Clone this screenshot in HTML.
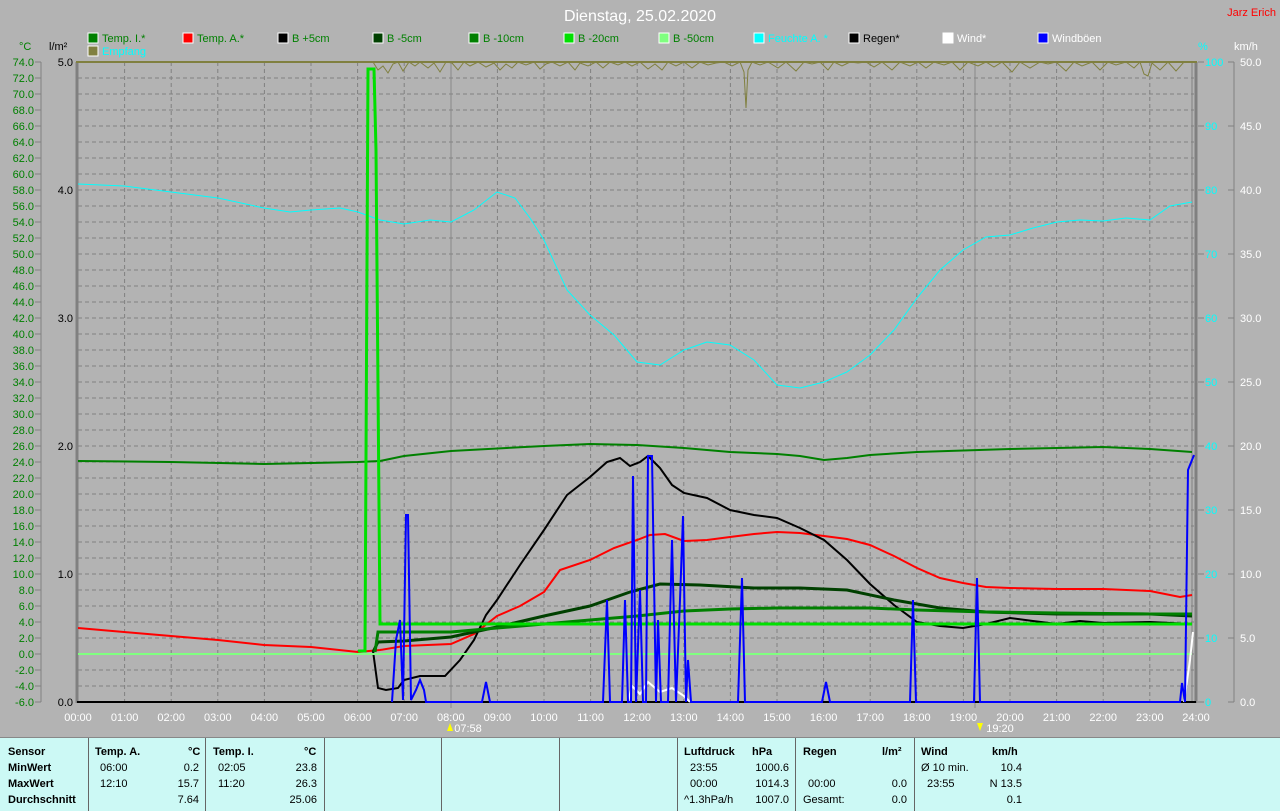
<!DOCTYPE html>
<html><head><meta charset="utf-8"><style>
html,body{margin:0;padding:0;background:#b3b3b3;width:1280px;height:810px;overflow:hidden;font-family:"Liberation Sans",sans-serif}
svg{position:absolute;left:0;top:0}
.tbl{position:absolute;left:0;top:737px;width:1280px;height:73px;background:#ccf9f5;border-top:1px solid #888}
.c{position:absolute;top:0;height:73px;border-left:1px solid #666}
.t{position:absolute;font-size:11px;font-weight:bold;color:#000;white-space:pre}
.n{position:absolute;font-size:11px;color:#000;white-space:pre}
</style></head><body>
<svg width="1280" height="737" font-family="Liberation Sans, sans-serif">
<text x="640" y="21" fill="#fff" font-size="16" text-anchor="middle">Dienstag, 25.02.2020</text>
<text x="1276" y="16" fill="#f00" font-size="11" text-anchor="end">Jarz Erich</text>
<g font-size="11">
<rect x="88" y="33" width="10" height="10" fill="#008000" stroke="#fff"/><text x="102" y="42" fill="#008000">Temp. I.*</text>
<rect x="183" y="33" width="10" height="10" fill="#f00" stroke="#fff"/><text x="197" y="42" fill="#008000">Temp. A.*</text>
<rect x="278" y="33" width="10" height="10" fill="#000" stroke="#fff"/><text x="292" y="42" fill="#008000">B +5cm</text>
<rect x="373" y="33" width="10" height="10" fill="#004000" stroke="#fff"/><text x="387" y="42" fill="#008000">B -5cm</text>
<rect x="469" y="33" width="10" height="10" fill="#008000" stroke="#fff"/><text x="483" y="42" fill="#008000">B -10cm</text>
<rect x="564" y="33" width="10" height="10" fill="#00e000" stroke="#fff"/><text x="578" y="42" fill="#008000">B -20cm</text>
<rect x="659" y="33" width="10" height="10" fill="#80ff80" stroke="#fff"/><text x="673" y="42" fill="#008000">B -50cm</text>
<rect x="754" y="33" width="10" height="10" fill="#00ffff" stroke="#fff"/><text x="768" y="42" fill="#00ffff">Feuchte A. *</text>
<rect x="849" y="33" width="10" height="10" fill="#000" stroke="#fff"/><text x="863" y="42" fill="#000">Regen*</text>
<rect x="943" y="33" width="10" height="10" fill="#fff" stroke="#fff"/><text x="957" y="42" fill="#fff">Wind*</text>
<rect x="1038" y="33" width="10" height="10" fill="#0000ff" stroke="#fff"/><text x="1052" y="42" fill="#fff">Windböen</text>
<rect x="88" y="46" width="10" height="10" fill="#808040" stroke="#fff"/><text x="102" y="55" fill="#00ffff">Empfang</text>
<text x="19" y="50" fill="#008000">°C</text>
<text x="49" y="50" fill="#000">l/m²</text>
<text x="1198" y="50" fill="#00ffff">%</text>
<text x="1234" y="50" fill="#fff">km/h</text>
</g>
<g stroke="#808080" stroke-dasharray="4,3" stroke-width="1">
<path d="M78 78H1194M78 94H1194M78 110H1194M78 126H1194M78 142H1194M78 158H1194M78 174H1194M78 190H1194M78 206H1194M78 222H1194M78 238H1194M78 254H1194M78 270H1194M78 286H1194M78 302H1194M78 318H1194M78 334H1194M78 350H1194M78 366H1194M78 382H1194M78 398H1194M78 414H1194M78 430H1194M78 446H1194M78 462H1194M78 478H1194M78 494H1194M78 510H1194M78 526H1194M78 542H1194M78 558H1194M78 574H1194M78 590H1194M78 606H1194M78 622H1194M78 638H1194M78 654H1194M78 670H1194M78 686H1194"/>
<path d="M124.6 62V702M171.2 62V702M217.8 62V702M264.4 62V702M311 62V702M357.6 62V702M404.2 62V702M497.4 62V702M544 62V702M590.6 62V702M637.2 62V702M683.8 62V702M730.4 62V702M777 62V702M823.6 62V702M870.2 62V702M916.8 62V702M963.4 62V702M1010 62V702M1056.6 62V702M1103.2 62V702M1149.8 62V702"/>
</g>
<path d="M451 62V708M975 62V708" stroke="#888" stroke-width="1"/>
<path d="M77 62V703M1196 62V703" stroke="#808080" stroke-width="3"/>
<path d="M1192 62V702" stroke="#808080" stroke-width="1"/>
<path d="M76 62H1197" stroke="#808040" stroke-width="2"/>
<path d="M77 702H1196" stroke="#000" stroke-width="2"/>
<path d="M41 62V702" stroke="#808080"/>
<g stroke="#808080"><path d="M35 62h6M35 78h6M35 94h6M35 110h6M35 126h6M35 142h6M35 158h6M35 174h6M35 190h6M35 206h6M35 222h6M35 238h6M35 254h6M35 270h6M35 286h6M35 302h6M35 318h6M35 334h6M35 350h6M35 366h6M35 382h6M35 398h6M35 414h6M35 430h6M35 446h6M35 462h6M35 478h6M35 494h6M35 510h6M35 526h6M35 542h6M35 558h6M35 574h6M35 590h6M35 606h6M35 622h6M35 638h6M35 654h6M35 670h6M35 686h6M35 702h6"/>
<path d="M1198 62h6M1198 126h6M1198 190h6M1198 254h6M1198 318h6M1198 382h6M1198 446h6M1198 510h6M1198 574h6M1198 638h6M1198 702h6"/>
<path d="M1234 62V702M1228 62h6M1228 126h6M1228 190h6M1228 254h6M1228 318h6M1228 382h6M1228 446h6M1228 510h6M1228 574h6M1228 638h6M1228 702h6"/></g>
<g font-size="11" fill="#008000" text-anchor="end">
<text x="34" y="66">74.0</text><text x="34" y="82">72.0</text><text x="34" y="98">70.0</text><text x="34" y="114">68.0</text><text x="34" y="130">66.0</text><text x="34" y="146">64.0</text><text x="34" y="162">62.0</text><text x="34" y="178">60.0</text><text x="34" y="194">58.0</text><text x="34" y="210">56.0</text><text x="34" y="226">54.0</text><text x="34" y="242">52.0</text><text x="34" y="258">50.0</text><text x="34" y="274">48.0</text><text x="34" y="290">46.0</text><text x="34" y="306">44.0</text><text x="34" y="322">42.0</text><text x="34" y="338">40.0</text><text x="34" y="354">38.0</text><text x="34" y="370">36.0</text><text x="34" y="386">34.0</text><text x="34" y="402">32.0</text><text x="34" y="418">30.0</text><text x="34" y="434">28.0</text><text x="34" y="450">26.0</text><text x="34" y="466">24.0</text><text x="34" y="482">22.0</text><text x="34" y="498">20.0</text><text x="34" y="514">18.0</text><text x="34" y="530">16.0</text><text x="34" y="546">14.0</text><text x="34" y="562">12.0</text><text x="34" y="578">10.0</text><text x="34" y="594">8.0</text><text x="34" y="610">6.0</text><text x="34" y="626">4.0</text><text x="34" y="642">2.0</text><text x="34" y="658">0.0</text><text x="34" y="674">-2.0</text><text x="34" y="690">-4.0</text><text x="34" y="706">-6.0</text>
</g>
<g font-size="11" fill="#000" text-anchor="end"><text x="73" y="66">5.0</text><text x="73" y="194">4.0</text><text x="73" y="322">3.0</text><text x="73" y="450">2.0</text><text x="73" y="578">1.0</text><text x="73" y="706">0.0</text></g>
<g font-size="11" fill="#00ffff"><text x="1205" y="66">100</text><text x="1205" y="130">90</text><text x="1205" y="194">80</text><text x="1205" y="258">70</text><text x="1205" y="322">60</text><text x="1205" y="386">50</text><text x="1205" y="450">40</text><text x="1205" y="514">30</text><text x="1205" y="578">20</text><text x="1205" y="642">10</text><text x="1205" y="706">0</text></g>
<g font-size="11" fill="#fff"><text x="1240" y="66">50.0</text><text x="1240" y="130">45.0</text><text x="1240" y="194">40.0</text><text x="1240" y="258">35.0</text><text x="1240" y="322">30.0</text><text x="1240" y="386">25.0</text><text x="1240" y="450">20.0</text><text x="1240" y="514">15.0</text><text x="1240" y="578">10.0</text><text x="1240" y="642">5.0</text><text x="1240" y="706">0.0</text></g>
<g font-size="11" fill="#fff" text-anchor="middle">
<text x="78" y="721">00:00</text><text x="124.6" y="721">01:00</text><text x="171.2" y="721">02:00</text><text x="217.8" y="721">03:00</text><text x="264.4" y="721">04:00</text><text x="311" y="721">05:00</text><text x="357.6" y="721">06:00</text><text x="404.2" y="721">07:00</text><text x="450.8" y="721">08:00</text><text x="497.4" y="721">09:00</text><text x="544" y="721">10:00</text><text x="590.6" y="721">11:00</text><text x="637.2" y="721">12:00</text><text x="683.8" y="721">13:00</text><text x="730.4" y="721">14:00</text><text x="777" y="721">15:00</text><text x="823.6" y="721">16:00</text><text x="870.2" y="721">17:00</text><text x="916.8" y="721">18:00</text><text x="963.4" y="721">19:00</text><text x="1010" y="721">20:00</text><text x="1056.6" y="721">21:00</text><text x="1103.2" y="721">22:00</text><text x="1149.8" y="721">23:00</text><text x="1196" y="721">24:00</text>
<text x="468" y="732">07:58</text><text x="1000" y="732">19:20</text></g>
<path d="M447 731l3-8 3 8z" fill="#ff0"/><path d="M977 723l3 8 3-8z" fill="#ff0"/>
<polyline fill="none" stroke="#808040" points="373,62 378,70 383,66 388,73 393,64 398,62 403,71 409,62 415,66 420,62 428,68 434,63 440,72 446,62 452,63 458,70 464,62 470,66 478,62 486,67 494,63 500,70 506,64 512,68 518,62 526,65 534,62 540,69 546,64 552,62 560,66 568,62 575,70 580,63 588,66 596,62 603,68 610,62 618,65 625,62 632,66 640,62 648,69 655,64 662,70 668,62 676,66 684,62 692,68 700,62 708,65 716,63 724,62 732,66 740,62 744,72 746,108 748,70 752,62 760,65 768,62 778,68 786,62 796,71 804,62 812,64 820,62 828,70 834,62 842,66 850,62 858,63 866,62 874,67 882,62 892,70 900,62 910,66 918,62 926,68 934,62 944,65 952,62 960,70 968,62 978,66 986,62 994,67 1002,62 1012,72 1020,62 1030,68 1040,62 1048,64 1056,62 1066,71 1074,62 1082,66 1092,62 1100,70 1108,62 1116,65 1126,62 1134,68 1140,62 1144,74 1148,76 1152,63 1160,70 1168,62 1176,71 1184,62 1192,62"/>
<polyline fill="none" stroke="#00ffff" points="78,184 124,186 171,192 218,198 264,208 290,212 311,210 340,208 358,212 380,220 404,224 430,220 451,222 474,210 497,192 515,198 530,218 544,240 567,290 590,315 614,335 637,362 660,365 684,350 707,342 730,345 754,360 777,385 800,388 824,382 847,372 870,355 894,330 917,298 940,270 963,250 986,237 1010,235 1033,228 1057,222 1080,220 1103,221 1126,218 1150,220 1170,206 1192,202"/>
<polyline fill="none" stroke="#008000" stroke-width="2" points="78,461 171,462 264,464 358,462 380,461 404,456 451,451 544,446 590,444 637,445 684,448 730,452 777,454 800,456 824,460 847,458 870,455 917,452 1010,449 1103,447 1150,449 1192,452"/>
<polyline fill="none" stroke="#f00" stroke-width="2" points="78,628 124,632 171,636 218,640 264,645 311,647 358,652 380,650 404,646 451,644 474,634 497,616 520,606 544,592 560,570 590,560 614,548 637,540 650,535 665,534 684,541 707,540 730,537 754,534 777,532 800,533 824,536 847,539 870,545 894,556 917,568 940,578 963,583 986,587 1010,588 1057,589 1103,589 1150,591 1180,597 1192,595"/>
<polyline fill="none" stroke="#000" stroke-width="2" points="373,651 378,688 386,690 398,688 404,680 420,676 445,676 460,660 474,640 486,615 497,600 520,565 544,530 567,495 590,477 607,462 620,458 630,466 640,462 648,456 660,468 672,485 684,493 707,498 730,510 754,515 777,518 800,528 824,540 847,560 870,584 894,605 917,622 940,626 963,628 986,624 1010,618 1033,621 1057,624 1080,621 1103,623 1150,622 1192,624"/>
<polyline fill="none" stroke="#004000" stroke-width="3" points="373,652 378,642 404,641 451,637 474,632 497,627 544,616 590,606 630,592 660,584 700,585 754,588 800,588 847,590 894,600 940,608 986,612 1057,614 1150,614 1192,616"/>
<polyline fill="none" stroke="#008000" stroke-width="3" points="375,652 378,632 404,632 451,632 497,628 544,624 590,620 637,616 684,611 730,609 777,608 870,608 917,610 986,612 1057,613 1150,614 1192,614"/>
<polyline fill="none" stroke="#00e000" stroke-width="3" points="358,651 365,651 368,69 374,69 376,150 380,624 1192,624"/>
<path d="M78 654H1192" stroke="#80ff80" stroke-width="2"/>
<polyline fill="none" stroke="#fff" stroke-width="2" points="628,702 632,686 640,694 648,682 660,692 672,688 684,696 690,702"/>
<polyline fill="none" stroke="#fff" stroke-width="2" points="1184,702 1190,660 1193,632"/>
<polyline fill="none" stroke="#0000ff" stroke-width="2" points="392,702 396,640 400,620 403,700 406,515 408,515 411,700 416,690 420,680 424,690 426,702 482,702 486,682 490,702 603,702 607,600 610,702 622,702 625,600 628,702 631,702 633,476 636,702 640,590 643,702 646,702 648,456 652,456 656,702 658,620 661,702 668,702 672,540 676,702 680,600 683,516 686,702 688,660 691,702 738,702 742,578 745,702 822,702 826,682 830,702 910,702 913,600 916,702 974,702 977,578 980,702 1180,702 1182,683 1185,702 1188,470 1194,455"/>
</svg>
<div class="tbl">
<div class="c" style="left:88px"></div><div class="c" style="left:205px"></div><div class="c" style="left:324px"></div><div class="c" style="left:441px"></div><div class="c" style="left:559px"></div><div class="c" style="left:677px"></div><div class="c" style="left:795px"></div><div class="c" style="left:914px"></div>
<div class="t" style="left:8px;top:8px">Sensor</div><div class="t" style="left:8px;top:24px">MinWert</div><div class="t" style="left:8px;top:40px">MaxWert</div><div class="t" style="left:8px;top:56px">Durchschnitt</div>
<div class="t" style="left:95px;top:8px">Temp. A.</div><div class="t" style="left:188px;top:8px">°C</div>
<div class="n" style="left:100px;top:24px">06:00</div><div class="n" style="left:175px;top:24px;width:24px;text-align:right">0.2</div>
<div class="n" style="left:100px;top:40px">12:10</div><div class="n" style="left:175px;top:40px;width:24px;text-align:right">15.7</div>
<div class="n" style="left:175px;top:56px;width:24px;text-align:right">7.64</div>
<div class="t" style="left:213px;top:8px">Temp. I.</div><div class="t" style="left:304px;top:8px">°C</div>
<div class="n" style="left:218px;top:24px">02:05</div><div class="n" style="left:285px;top:24px;width:32px;text-align:right">23.8</div>
<div class="n" style="left:218px;top:40px">11:20</div><div class="n" style="left:285px;top:40px;width:32px;text-align:right">26.3</div>
<div class="n" style="left:285px;top:56px;width:32px;text-align:right">25.06</div>
<div class="t" style="left:684px;top:8px">Luftdruck</div><div class="t" style="left:752px;top:8px">hPa</div>
<div class="n" style="left:690px;top:24px">23:55</div><div class="n" style="left:750px;top:24px;width:39px;text-align:right">1000.6</div>
<div class="n" style="left:690px;top:40px">00:00</div><div class="n" style="left:750px;top:40px;width:39px;text-align:right">1014.3</div>
<div class="n" style="left:684px;top:56px">^1.3hPa/h</div><div class="n" style="left:750px;top:56px;width:39px;text-align:right">1007.0</div>
<div class="t" style="left:803px;top:8px">Regen</div><div class="t" style="left:882px;top:8px">l/m²</div>
<div class="n" style="left:808px;top:40px">00:00</div><div class="n" style="left:870px;top:40px;width:37px;text-align:right">0.0</div>
<div class="n" style="left:803px;top:56px">Gesamt:</div><div class="n" style="left:870px;top:56px;width:37px;text-align:right">0.0</div>
<div class="t" style="left:921px;top:8px">Wind</div><div class="t" style="left:992px;top:8px">km/h</div>
<div class="n" style="left:921px;top:24px">Ø 10 min.</div><div class="n" style="left:980px;top:24px;width:42px;text-align:right">10.4</div>
<div class="n" style="left:927px;top:40px">23:55</div><div class="n" style="left:980px;top:40px;width:42px;text-align:right">N 13.5</div>
<div class="n" style="left:980px;top:56px;width:42px;text-align:right">0.1</div>
</div>
</body></html>
